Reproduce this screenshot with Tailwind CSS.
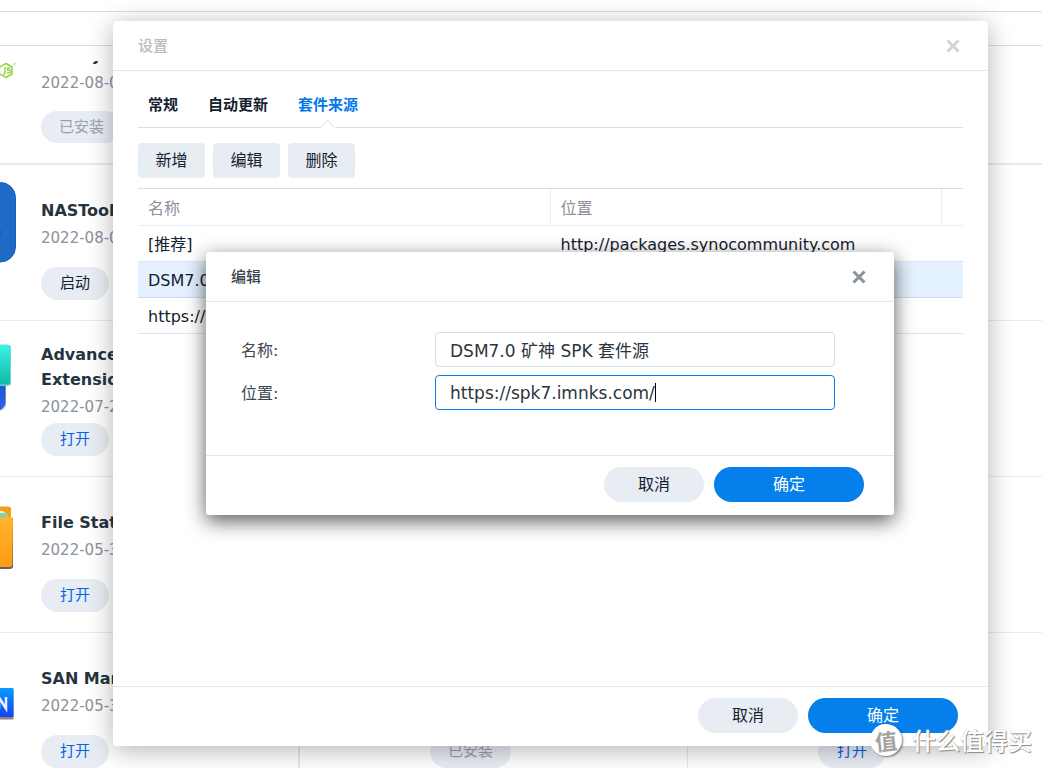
<!DOCTYPE html>
<html lang="zh-CN">
<head>
<meta charset="utf-8">
<meta name="viewport" content="width=device-width, initial-scale=1">
<title>套件中心</title>
<script src="https://cdn.jsdelivr.net/npm/@tailwindcss/browser@4"></script>
</head>
<body class="relative flex h-screen flex-col overflow-hidden bg-white font-['DejaVu_Sans','Noto_Sans_CJK_SC',sans-serif] text-[15px] text-[#14212e]">

<!-- Package list behind the dialogs -->
<header class="h-3 shrink-0 border-b border-[#d6e0ea]"></header>
<div class="h-[34px] shrink-0 border-b border-[#d3dee8]"></div>
<main class="mt-[15px] min-h-0 flex-1 overflow-hidden">
  <section class="flex h-[104px] items-end border-b-2 border-[#e6ebf0]">
    <svg class="h-[102px] w-[41px] shrink-0" viewBox="0 0 41 102" fill="none" stroke="#8fd13f" aria-hidden="true">
      <path d="M6 2.500 12 6v7l-6 3.500L-.5 13V6Z" stroke-width="1.500"/>
      <path d="M5 6v6q0 1.500-2 .8M10 7H7.500v2.200H10v2.600H7" stroke-width="1.300"/>
      <circle cx="14.500" cy="3" r=".8" stroke-width=".6"/>
    </svg>
    <div class="flex flex-col items-start pb-5">
      <h3 class="text-base leading-[25px] font-bold text-[#26343f]">Node.js</h3>
      <p class="leading-[31px] text-[#8a919b]">2022-08-03</p>
      <button disabled class="mt-3 h-8 rounded-full bg-[#e8edf4] px-[18px] text-[15px] text-[#98a0ac]">已安装</button>
    </div>
  </section>

  <section class="flex h-39 border-b border-[#e9ecef]">
    <svg class="h-[155px] w-[41px] shrink-0" viewBox="0 0 41 155" aria-hidden="true">
      <rect x="-64" y="17.500" width="79.500" height="79.500" rx="15" fill="#1f6ac6" stroke="#1161b8"/>
      <circle cx="-6" cy="68" r="7.500" fill="#0a63cf"/>
    </svg>
    <div class="flex flex-col items-start pt-5 pb-5">
      <div class="flex flex-1 flex-col justify-center">
        <h3 class="text-base leading-[25px] font-bold text-[#26343f]">NASTool</h3>
        <p class="leading-[31px] text-[#8a919b]">2022-08-02</p>
      </div>
      <button class="h-[33px] rounded-full bg-[#e8edf4] px-[19px] text-[15px]">启动</button>
    </div>
  </section>

  <section class="flex h-39 border-b border-[#e9ecef]">
    <svg class="h-[155px] w-[41px] shrink-0" viewBox="0 0 41 155" aria-hidden="true">
      <defs>
        <linearGradient id="teal" x1="0" y1="0" x2="0" y2="1"><stop stop-color="#3df2e6"/><stop offset="1" stop-color="#0eb9a6"/></linearGradient>
        <linearGradient id="blue" x1="0" y1="0" x2="0" y2="1"><stop stop-color="#1d52cc"/><stop offset="1" stop-color="#2c66ee"/></linearGradient>
      </defs>
      <path d="M-5 60H6v24q-1 5-11 8Z" fill="#8d949e" opacity=".6"/>
      <path d="M-5 60H5.500v22q-1 6-10.500 9Z" fill="url(#blue)"/>
      <rect x="-20" y="24.500" width="31" height="40.500" rx="3" fill="#9fb5b3" opacity=".7"/>
      <rect x="-20" y="24" width="30.500" height="40" rx="3" fill="url(#teal)" stroke="#5ee0d2"/>
    </svg>
    <div class="flex flex-col items-start pt-5 pb-5">
      <div class="flex flex-1 flex-col justify-center">
        <h3 class="text-base leading-[25px] font-bold text-[#26343f]">Advanced Media<br>Extensions</h3>
        <p class="leading-[31px] text-[#8a919b]">2022-07-26</p>
      </div>
      <button class="h-[33px] rounded-full bg-[#e8edf4] px-[19px] text-[15px] text-[#0564e8]">打开</button>
    </div>
  </section>

  <section class="flex h-39 border-b border-[#e9ecef]">
    <svg class="h-[155px] w-[41px] shrink-0" viewBox="0 0 41 155" aria-hidden="true">
      <defs>
        <linearGradient id="folder" x1="0" y1="0" x2="0" y2="1"><stop stop-color="#ffb52b"/><stop offset="1" stop-color="#ff9a17"/></linearGradient>
      </defs>
      <path d="M-5 30H8q3 0 3 3v8h2v48q0 3-3 3H-5Z" fill="#66605a"/>
      <path d="M-5 29.500H8q3 0 3 3V60H-5Z" fill="#fb9d10"/>
      <path d="M-5 35H4q4 0 4 4v6H-5Z" fill="#8bd1a0"/>
      <path d="M-5 34H3l2 2H-5Z" fill="#d6f5f1"/>
      <path d="M-5 43H0l3-3h7q3 0 3 3l-.7 44q0 3-3 3H-5Z" fill="url(#folder)"/>
    </svg>
    <div class="flex flex-col items-start pt-5 pb-5">
      <div class="flex flex-1 flex-col justify-center">
        <h3 class="text-base leading-[25px] font-bold text-[#26343f]">File Station</h3>
        <p class="leading-[31px] text-[#8a919b]">2022-05-31</p>
      </div>
      <button class="h-[33px] rounded-full bg-[#e8edf4] px-[19px] text-[15px] text-[#0564e8]">打开</button>
    </div>
  </section>

  <section class="grid h-39 grid-cols-[300px_388px_1fr] border-b border-[#e9ecef]">
    <div class="flex border-r-2 border-[#e3e9ef]">
      <svg class="h-[155px] w-[41px] shrink-0" viewBox="0 0 41 155" aria-hidden="true">
        <defs>
          <linearGradient id="san" x1="0" y1="0" x2="0" y2="1"><stop stop-color="#0a9bff"/><stop offset="1" stop-color="#1242f5"/></linearGradient>
        </defs>
        <rect x="-30" y="57" width="43.500" height="29.500" rx="1" fill="#8c857c"/>
        <rect x="-30" y="55" width="43.500" height="29" rx="1" fill="url(#san)"/>
        <path d="M-1 76V64.500L6 75.500V64" fill="none" stroke="#e9f1ff" stroke-width="2.500"/>
      </svg>
      <div class="flex flex-col items-start pt-5 pb-5">
        <div class="flex flex-1 flex-col justify-center">
          <h3 class="text-base leading-[25px] font-bold text-[#26343f]">SAN Manager</h3>
          <p class="leading-[31px] text-[#8a919b]">2022-05-31</p>
        </div>
        <button class="h-[33px] rounded-full bg-[#e8edf4] px-[19px] text-[15px] text-[#0564e8]">打开</button>
      </div>
    </div>
    <div class="flex items-end border-r border-[#e3e9ef] pb-5 pl-[130px]">
      <button disabled class="h-[33px] rounded-full bg-[#e8edf4] px-[18px] text-[15px] text-[#98a0ac]">已安装</button>
    </div>
    <div class="flex items-end pb-5 pl-[130px]">
      <button class="h-[33px] rounded-full bg-[#e8edf4] px-[19px] text-[15px] text-[#0564e8]">打开</button>
    </div>
  </section>
</main>

<!-- Settings window -->
<div role="dialog" aria-labelledby="settings-title" class="absolute top-[21px] right-[54px] left-[113px] rounded-sm bg-white shadow-[0_4px_26px_rgba(0,0,0,0.3)]">
  <header class="flex h-[50px] items-center justify-between border-b border-[#dfe7ee] px-[25px]">
    <h2 id="settings-title" class="pt-0.5 font-medium text-[#b7bbc0]">设置</h2>
    <button aria-label="关闭" class="flex size-5 items-center justify-center text-[#d0d3d6]">
      <svg class="size-3.5" viewBox="0 0 14 14" fill="none" stroke="currentColor" stroke-width="3"><path d="M1.500 1.500l11 11M12.500 1.500l-11 11"/></svg>
    </button>
  </header>
  <div class="min-h-[615px] px-[25px] pt-4">
    <nav class="relative flex h-[41px] items-center gap-[30px] border-b border-[#d6e1ea] px-2.5 pb-1 font-bold" role="tablist">
      <button role="tab" aria-selected="false">常规</button>
      <button role="tab" aria-selected="false">自动更新</button>
      <button role="tab" aria-selected="true" class="text-[#0578ec]">套件来源</button>
      <svg class="absolute -bottom-px left-[182px] h-[9px] w-4" viewBox="0 0 16 9" aria-hidden="true"><path d="M0 9 8 1l8 8Z" fill="#fff"/><path d="M.5 8.500 7.500 1.200 14.500 8.500" fill="none" stroke="#d0dde8"/></svg>
    </nav>
    <div class="flex gap-2 py-[15px] pb-2.5 text-base">
      <button class="h-[35px] w-[67px] rounded bg-[#e8edf4]">新增</button>
      <button class="h-[35px] w-[67px] rounded bg-[#e8edf4]">编辑</button>
      <button class="h-[35px] w-[67px] rounded bg-[#e8edf4]">删除</button>
    </div>
    <table class="w-full table-fixed border-separate border-spacing-0 border-t border-[#d0dfea] text-left text-base">
      <colgroup><col class="w-1/2"><col><col class="w-[21px]"></colgroup>
      <thead class="text-[#8a929c]">
        <tr class="h-[37px]">
          <th class="border-r border-b border-[#e6edf5] px-2.5 pt-1 pb-0 font-normal">名称</th>
          <th class="border-r border-b border-[#e6edf5] px-2.5 pt-1 pb-0 font-normal">位置</th>
          <td class="border-b border-[#e6edf5] p-0"></td>
        </tr>
      </thead>
      <tbody>
        <tr class="h-9"><td class="border-b border-[#dbe6f0] px-2.5 pt-0.5 pb-0">[推荐]</td><td class="border-b border-[#dbe6f0] px-2.5 pt-0.5 pb-0">http://packages.synocommunity.com</td><td class="border-b border-[#dbe6f0] p-0"></td></tr>
        <tr class="h-9 bg-[#e4f1fe]"><td class="border-b border-[#c9dced] px-2.5 pt-0.5 pb-0 whitespace-nowrap">DSM7.0 矿神 SPK 套件源</td><td class="border-b border-[#c9dced] px-2.5 pt-0.5 pb-0">https://spk7.imnks.com/</td><td class="border-b border-[#c9dced] p-0"></td></tr>
        <tr class="h-9"><td class="border-b border-[#dbe6f0] px-2.5 pt-0.5 pb-0">https://</td><td class="border-b border-[#dbe6f0] px-2.5 pt-0.5 pb-0"></td><td class="border-b border-[#dbe6f0] p-0"></td></tr>
      </tbody>
    </table>
  </div>
  <footer class="flex h-[60px] items-center justify-end gap-2.5 border-t border-[#e1e9f0] px-[30px] pb-0.5 text-base">
    <button class="h-[35px] w-[100px] rounded-full bg-[#e8edf4]">取消</button>
    <button class="h-[35px] w-[150px] rounded-full bg-[#057feb] text-white">确定</button>
  </footer>
</div>

<!-- Edit source window -->
<form role="dialog" aria-labelledby="edit-title" class="absolute top-[252px] right-[148px] left-[206px] rounded-[3px] bg-white text-base shadow-[0_6px_20px_rgba(0,0,0,0.65)]">
  <header class="flex h-[50px] items-center justify-between border-b border-[#dfe7ee] px-[25px]">
    <h2 id="edit-title" class="pt-0.5 text-[15px] font-medium text-[#36424d]">编辑</h2>
    <button type="button" aria-label="关闭" class="flex size-5 items-center justify-center text-[#8b9299]">
      <svg class="size-3.5" viewBox="0 0 14 14" fill="none" stroke="currentColor" stroke-width="3"><path d="M1.500 1.500l11 11M12.500 1.500l-11 11"/></svg>
    </button>
  </header>
  <div class="flex flex-col gap-2 px-[35px] pt-[30px] pb-[45px] text-[#3d4751]">
    <div class="flex h-[35px] items-center">
      <label for="source-name" class="w-[194px] pt-0.5">名称:</label>
      <input id="source-name" type="text" value="DSM7.0 矿神 SPK 套件源" class="h-full w-[400px] rounded border border-[#d4dfe8] px-3.5 text-[17px] text-[#2b3640] outline-none">
    </div>
    <div class="flex h-[35px] items-center">
      <label for="source-url" class="w-[194px] pt-0.5">位置:</label>
      <div class="relative h-full w-[400px]">
        <input id="source-url" type="text" value="https://spk7.imnks.com/" class="h-full w-full rounded border border-[#057feb] px-3.5 text-[17px] text-[#2b3640] outline-none">
        <span class="absolute top-2 left-[220px] h-[19px] w-px bg-black"></span>
      </div>
    </div>
  </div>
  <footer class="flex h-[60px] items-center justify-end gap-2.5 border-t border-[#e1e9f0] px-[30px] pb-0.5">
    <button type="button" class="h-[35px] w-[100px] rounded-full bg-[#e8edf4]">取消</button>
    <button type="submit" class="h-[35px] w-[150px] rounded-full bg-[#057feb] text-white">确定</button>
  </footer>
</form>

<!-- Site watermark -->
<div class="absolute right-2.5 bottom-3 flex items-center gap-2.5 font-['Noto_Sans_CJK_SC',sans-serif] text-white">
  <span class="flex size-8 -rotate-6 items-center justify-center rounded-full bg-white text-[22px] leading-none font-bold text-[#a3a3a3] shadow-[1px_1px_2px_rgba(0,0,0,0.5)]">值</span>
  <span class="text-2xl leading-8 font-medium [text-shadow:1px_1px_1px_#888,0_0_1px_#aaa]">什么值得买</span>
</div>
</body>
</html>
